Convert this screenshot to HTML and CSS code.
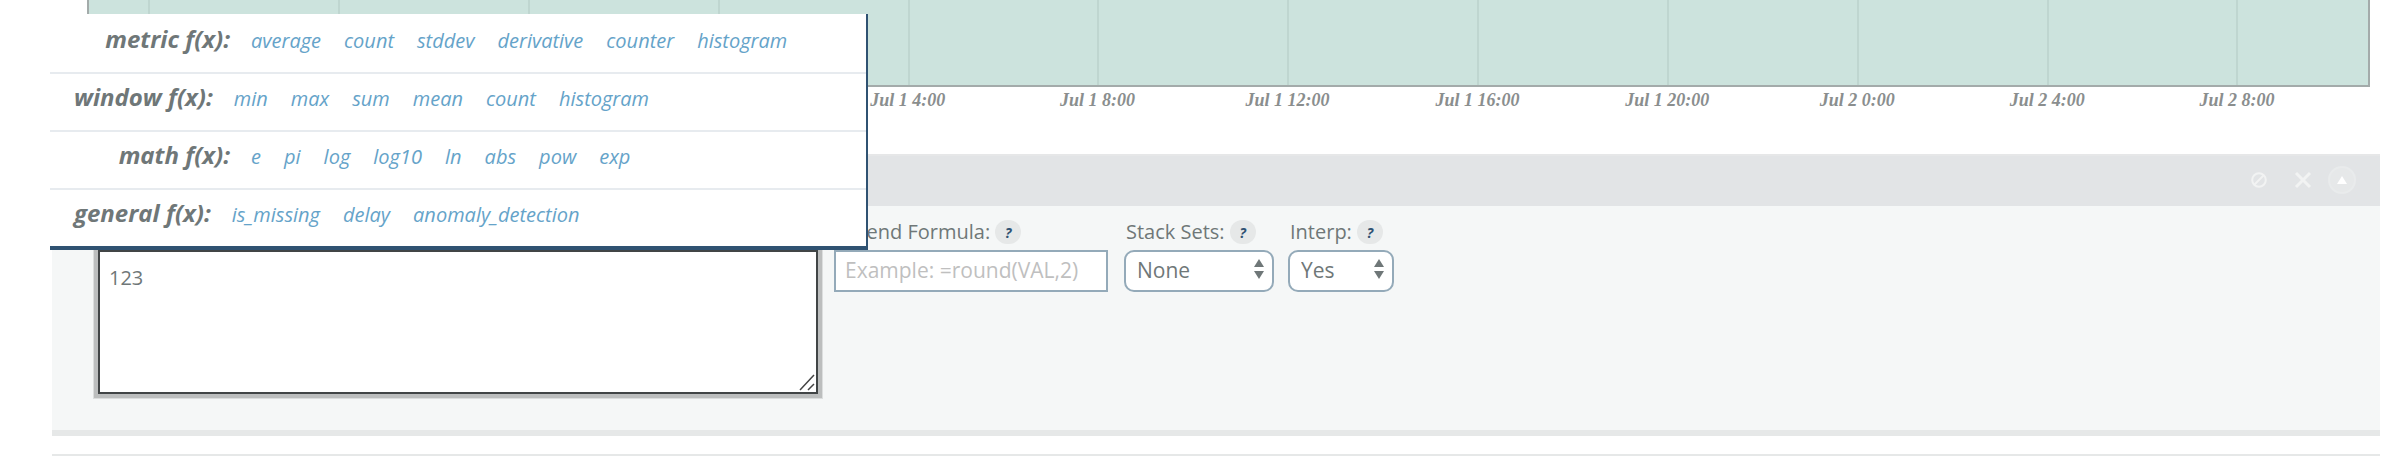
FILE: index.html
```
<!DOCTYPE html>
<html lang="en">
<head>
<meta charset="utf-8">
<title>Metric editor</title>
<link rel="stylesheet" href="styles.css">
</head>
<body>
<main class="page">
  <section class="chart" aria-label="Timeline">
    <div class="plot">
      <span class="edge"></span>
      <span class="tick"></span><span class="tick"></span><span class="tick"></span><span class="tick"></span>
      <span class="tick"></span><span class="tick"></span><span class="tick"></span><span class="tick"></span>
      <span class="tick"></span><span class="tick"></span><span class="tick"></span>
      <span class="tick last"></span>
    </div>
    <div class="axis">
      <span></span><span></span><span></span><span></span>
      <span>Jul 1 4:00</span><span>Jul 1 8:00</span><span>Jul 1 12:00</span><span>Jul 1 16:00</span>
      <span>Jul 1 20:00</span><span>Jul 2 0:00</span><span>Jul 2 4:00</span><span>Jul 2 8:00</span>
    </div>
  </section>

  <section class="panel">
    <header class="panel-head">
      <button class="icon-btn" type="button" aria-label="Disable"><svg width="18" height="18" viewBox="0 0 18 18"><circle cx="9" cy="9" r="6.8"/><path d="M4.5 13.5 13.5 4.5"/></svg></button>
      <button class="icon-btn" type="button" aria-label="Remove"><svg class="heavy" width="18" height="18" viewBox="0 0 18 18"><path d="M2 2 16 16M16 2 2 16"/></svg></button>
      <button class="icon-btn round" type="button" aria-label="Collapse"><svg width="10" height="8" viewBox="0 0 10 8"><path class="solid" d="M5 0 10 8H0Z"/></svg></button>
    </header>
    <div class="fields">
      <div class="field wide">
        <div class="caption"></div>
        <div class="area">
          <textarea aria-label="Formula">123</textarea>
          <svg class="grip" width="16" height="18" viewBox="0 0 16 18"><path d="M1 17 15 2M9 17 15 11"/></svg>
        </div>
      </div>
      <div class="field legend">
        <div class="caption"><label for="legend">Legend Formula:</label><button class="help" type="button">?</button></div>
        <input id="legend" class="control" type="text" placeholder="Example: =round(VAL,2)">
      </div>
      <div class="field stack">
        <div class="caption inset"><label for="stack">Stack Sets:</label><button class="help" type="button">?</button></div>
        <div class="pick">
          <select id="stack" class="control"><option>None</option></select>
          <svg class="arrows" width="10" height="20" viewBox="0 0 10 20"><path d="M5 0 10 8H0ZM0 12H10L5 20Z"/></svg>
        </div>
      </div>
      <div class="field interp">
        <div class="caption inset"><label for="interp">Interp:</label><button class="help" type="button">?</button></div>
        <div class="pick">
          <select id="interp" class="control"><option>Yes</option></select>
          <svg class="arrows" width="10" height="20" viewBox="0 0 10 20"><path d="M5 0 10 8H0ZM0 12H10L5 20Z"/></svg>
        </div>
      </div>
    </div>
  </section>
  <hr class="rule">

  <nav class="popup" aria-label="Functions">
    <div class="row aligned"><strong>metric f(x):</strong><a href="#">average</a><a href="#">count</a><a href="#">stddev</a><a href="#">derivative</a><a href="#">counter</a><a href="#">histogram</a></div>
    <div class="row"><strong>window f(x):</strong><a href="#">min</a><a href="#">max</a><a href="#">sum</a><a href="#">mean</a><a href="#">count</a><a href="#">histogram</a></div>
    <div class="row aligned"><strong>math f(x):</strong><a href="#">e</a><a href="#">pi</a><a href="#">log</a><a href="#">log10</a><a href="#">ln</a><a href="#">abs</a><a href="#">pow</a><a href="#">exp</a></div>
    <div class="row"><strong>general f(x):</strong><a href="#">is_missing</a><a href="#">delay</a><a href="#">anomaly_detection</a></div>
  </nav>
</main>
</body>
</html>
```
FILE: styles.css
```
* { box-sizing: border-box; }

body {
  margin: 0;
  background: #fff;
  color: #6f7778;
  font-family: "Open Sans", sans-serif;
  font-size: 20px;
}

button, input, select, textarea { font: inherit; color: inherit; }

.page { position: relative; }

/* chart */
.chart { margin: 0 16px 0 87px; height: 154px; }

.plot {
  display: flex;
  height: 87px;
  background: #cce3dd;
  border: 2px solid #a3abaa;
  border-top: 0;
}

.edge { flex: 60 0 0; }
.tick { flex: 190 0 0; border-left: 2px solid #bfd6d0; }
.tick.last { flex-grow: 131; }

.axis {
  display: flex;
  margin-left: -34px;
  margin-right: 38px;
  color: #8a8e8e;
  font: italic bold 18px/26px "Liberation Serif", serif;
}
.axis span { flex: 1 0 0; text-align: center; white-space: nowrap; }

/* panel */
.panel {
  margin: 0 6px 0 52px;
  background: #f5f7f7;
  border-bottom: 6px solid #e6e8e8;
}

.panel-head {
  display: flex;
  justify-content: flex-end;
  align-items: center;
  gap: 22px;
  height: 52px;
  padding: 0 24px 2px 0;
  background: #e2e4e6;
  border-top: 2px solid #e6e7e8;
}

.icon-btn {
  display: flex;
  align-items: center;
  justify-content: center;
  padding: 0;
  width: 22px;
  height: 28px;
  border: 0;
  background: none;
}
.icon-btn svg { fill: none; stroke: #f2f3f3; stroke-width: 2; }
.icon-btn .heavy { stroke-width: 3; }
.icon-btn .solid { fill: #fff; stroke: none; }
.icon-btn.round {
  width: 28px;
  margin-left: -8px;
  border: 2px solid #e9ebec;
  border-radius: 50%;
  background: #e6e8e9;
}

.fields {
  display: flex;
  align-items: flex-start;
  padding: 10px 0 36px 46px;
}
.caption {
  display: flex;
  align-items: center;
  height: 34px;
  padding-bottom: 4px;
  white-space: nowrap;
}
.caption.inset { padding-left: 2px; }
.wide { width: 720px; margin-right: 16px; }
.legend { width: 274px; margin-right: 16px; }
.stack { width: 150px; margin-right: 14px; }
.interp { width: 106px; }

.help {
  width: 26px;
  height: 24px;
  margin: 2px 0 0 5px;
  padding: 0;
  border: 0;
  border-radius: 12px;
  background: #e6e8e8;
  color: #2f5272;
  font-size: 14px;
  font-weight: 700;
  font-style: italic;
}

.area, .pick { position: relative; }

textarea {
  display: block;
  width: 100%;
  height: 144px;
  padding: 12px 9px;
  resize: none;
  border: 2px solid #414546;
  outline: 0;
  background: #fff;
  box-shadow: 0 0 0 4px #bcbebe, 0 0 0 5px #dcdede;
}
.grip {
  position: absolute;
  right: 3px;
  bottom: 3px;
  fill: none;
  stroke: #444;
  stroke-width: 1.5;
}

.control {
  display: block;
  width: 100%;
  height: 42px;
  padding: 0 9px 2px;
  border: 2px solid #94aab9;
  background: #fff;
  outline: 0;
  border-radius: 0;
  font-size: 21px;
}
.control::placeholder { color: #bfbfbf; opacity: 1; }
select.control { appearance: none; border-radius: 10px; padding-left: 11px; }
.arrows {
  position: absolute;
  right: 10px;
  top: 9px;
  fill: #6f7778;
  pointer-events: none;
}

.rule {
  margin: 18px 6px 0 52px;
  border: 0;
  border-top: 2px solid #e6e8e8;
}

/* function menu over the chart and panel */
.popup {
  position: absolute;
  top: 14px;
  left: 50px;
  width: 818px;
  padding-top: 2px;
  background: #fff;
  border-right: 2px solid #2f5272;
  border-bottom: 4px solid #2f5272;
}
.row {
  display: flex;
  align-items: baseline;
  gap: 23px;
  height: 58px;
  padding: 6px 0 0 24px;
  border-bottom: 2px solid #e7ebef;
  font-style: italic;
}
.row:last-child { height: 56px; border-bottom: 0; }
.row strong { font-size: 24px; margin-right: -2px; }
.row.aligned strong { width: 156px; text-align: right; }
.row a { color: #65a3c9; text-decoration: none; }
```
